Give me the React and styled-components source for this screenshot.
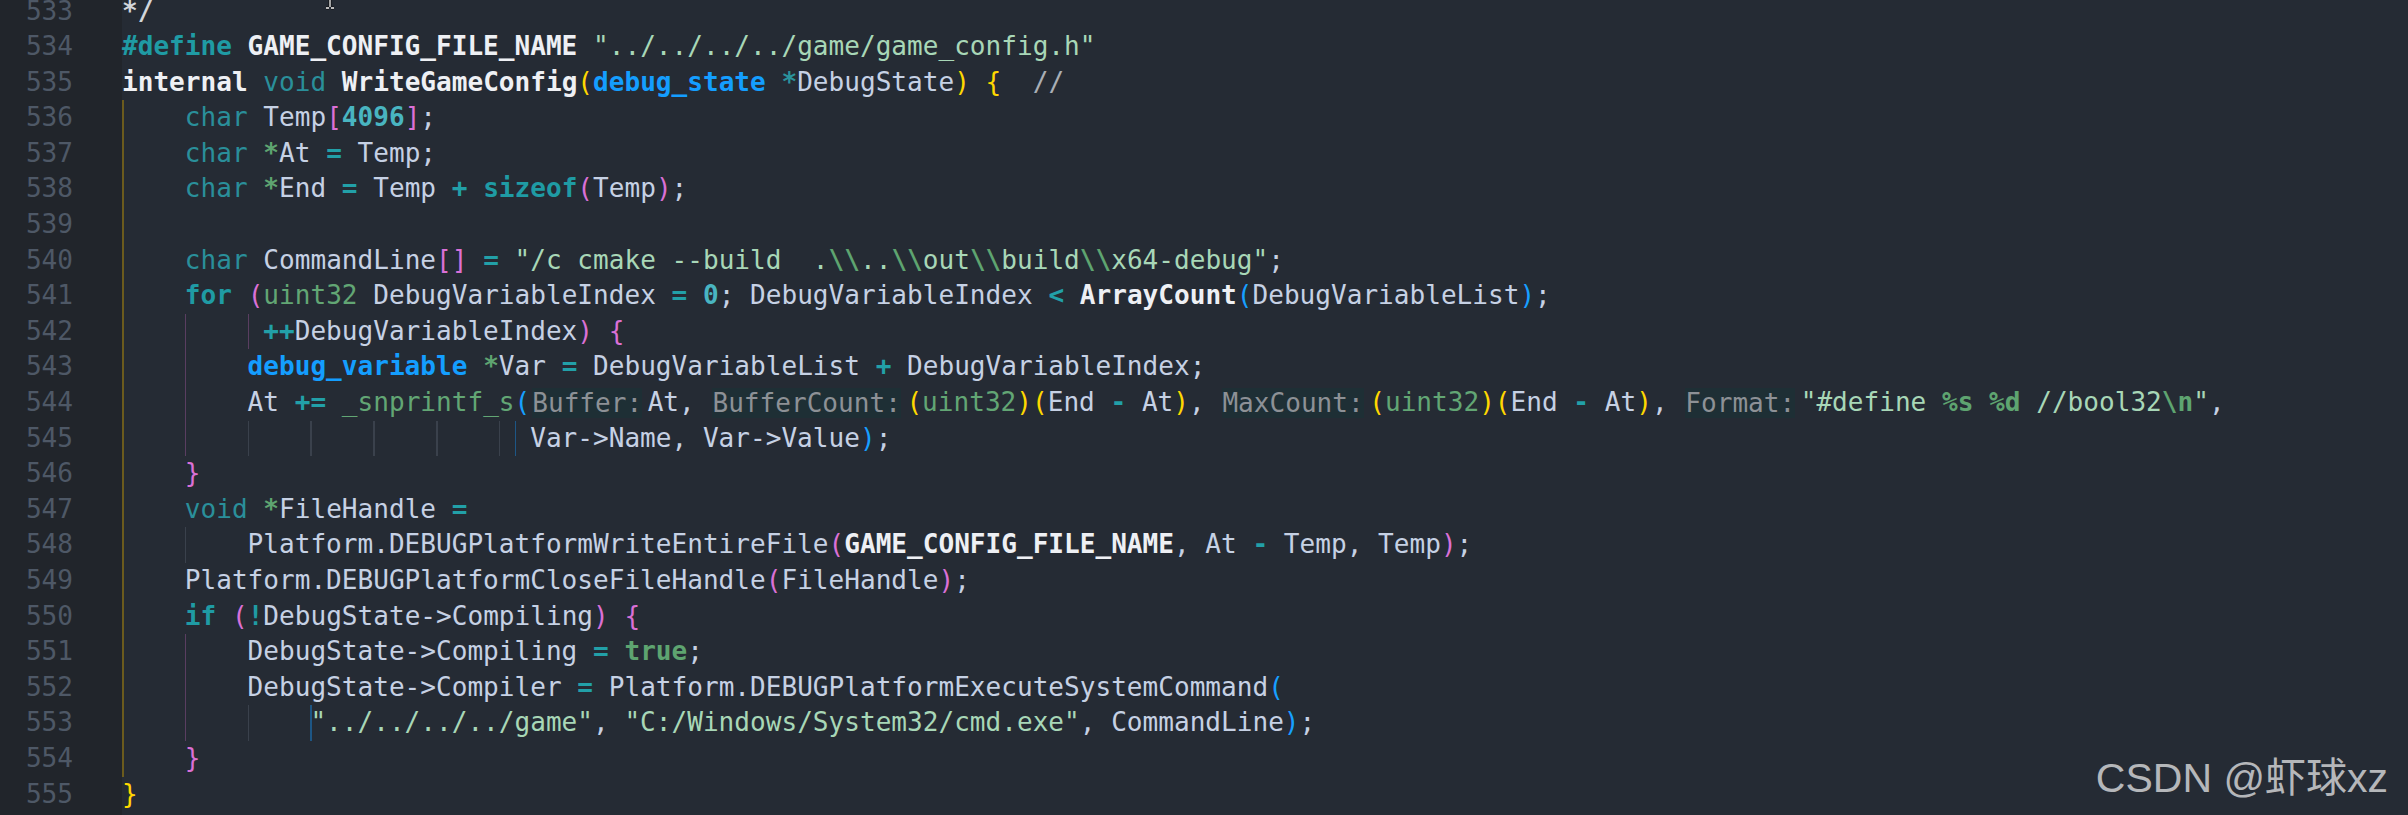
import React from "react";
import styled, { createGlobalStyle } from "styled-components";

const CW = 15.7;
const LH = 35.6;

const Global = createGlobalStyle`
  html, body { margin: 0; padding: 0; background: #252b34; }
  body { width: 2408px; height: 815px; overflow: hidden; }
`;

const Editor = styled.div`
  position: relative;
  display: flex;
  width: 2408px;
  height: 815px;
  overflow: hidden;
  background: #252b34;
  font-family: "DejaVu Sans Mono", "Liberation Mono", monospace;
  font-size: 26.08px;
`;

const Gutter = styled.div`
  flex: 0 0 122px;
  background: #21252b;
  display: flex;
  flex-direction: column;
  margin-top: -6.5px;
`;

const LineNo = styled.div`
  height: ${LH}px;
  line-height: ${LH}px;
  text-align: right;
  padding-right: 49px;
  color: #4e5866;
`;

const Code = styled.div`
  flex: 1;
  display: flex;
  flex-direction: column;
  margin-top: -6.5px;
`;

const Line = styled.div`
  position: relative;
  height: ${LH}px;
  line-height: ${LH}px;
  white-space: pre;
  display: flex;
  align-items: center;
`;

const Guide = styled.span`
  position: absolute;
  top: 0;
  bottom: 0;
  left: ${(p) => p.$col * CW}px;
  width: ${(p) => (p.$kind === "gold" ? 2 : 1.5)}px;
  background: ${(p) =>
    ({ gold: "#6b5b1d", purple: "#5a3e61", gray: "#3a414c", blue: "#1d5685" }[p.$kind])};
`;

const COLORS = {
  d: ["#c6d1e4", 400],
  w: ["#eef0f4", 700],
  kw: ["#1f9ba4", 700],
  ty: ["#2a8f9a", 400],
  op: ["#22a0a8", 700],
  num: ["#49b5c1", 700],
  st: ["#149eff", 700],
  g: ["#62a674", 400],
  gb: ["#5ea470", 700],
  pt: ["#2a939c", 700],
  s: ["#a8d7b7", 400],
  c: ["#a9aeb5", 400],
  cm: ["#d2d5da", 700],
  y: ["#ffd700", 400],
  p: ["#da70d6", 400],
  b: ["#179fff", 400],
};

const Tok = styled.span`
  color: ${(p) => COLORS[p.$k][0]};
  font-weight: ${(p) => COLORS[p.$k][1]};
`;

const Hint = styled.span`
  background: #1e2f35;
  color: #8d9196;
  margin: 0 5.5px 0 2px;
  line-height: 30px;
  height: 30px;
  display: inline-block;
`;

const Watermark = styled.div`
  position: absolute;
  right: 20px;
  top: 758px;
  font-family: "Liberation Sans", Arial, "Noto Sans CJK SC", sans-serif;
  font-size: 41px;
  line-height: 41px;
  color: #b5b7ba;
  white-space: nowrap;
`;

const Cursor = styled.svg`
  position: absolute;
  left: 322px;
  top: 0;
`;

const sp = (n) => ["d", " ".repeat(n)];

const LINES = [
  { n: 533, t: [["cm", "*/"]] },
  {
    n: 534,
    t: [["kw", "#define"], sp(1), ["w", "GAME_CONFIG_FILE_NAME"], sp(1), ["s", '"../../../../game/game_config.h"']],
  },
  {
    n: 535,
    t: [
      ["w", "internal"], sp(1), ["ty", "void"], sp(1), ["w", "WriteGameConfig"], ["y", "("],
      ["st", "debug_state"], sp(1), ["pt", "*"], ["d", "DebugState"], ["y", ")"], sp(1), ["y", "{"], sp(2), ["c", "//"],
    ],
  },
  {
    n: 536, g: [[0, "gold"]],
    t: [sp(4), ["ty", "char"], ["d", " Temp"], ["p", "["], ["num", "4096"], ["p", "]"], ["d", ";"]],
  },
  {
    n: 537, g: [[0, "gold"]],
    t: [sp(4), ["ty", "char"], sp(1), ["gb", "*"], ["d", "At "], ["op", "="], ["d", " Temp;"]],
  },
  {
    n: 538, g: [[0, "gold"]],
    t: [sp(4), ["ty", "char"], sp(1), ["gb", "*"], ["d", "End "], ["op", "="], ["d", " Temp "], ["op", "+"], sp(1),
      ["kw", "sizeof"], ["p", "("], ["d", "Temp"], ["p", ")"], ["d", ";"]],
  },
  { n: 539, g: [[0, "gold"]], t: [] },
  {
    n: 540, g: [[0, "gold"]],
    t: [sp(4), ["ty", "char"], ["d", " CommandLine"], ["p", "[]"], sp(1), ["op", "="], sp(1),
      ["s", '"/c cmake --build  .'], ["gb", "\\\\"], ["s", ".."], ["gb", "\\\\"], ["s", "out"], ["gb", "\\\\"],
      ["s", "build"], ["gb", "\\\\"], ["s", 'x64-debug"'], ["d", ";"]],
  },
  {
    n: 541, g: [[0, "gold"]],
    t: [sp(4), ["kw", "for"], sp(1), ["p", "("], ["g", "uint32"], ["d", " DebugVariableIndex "], ["op", "="], sp(1),
      ["num", "0"], ["d", "; DebugVariableIndex "], ["op", "<"], sp(1), ["w", "ArrayCount"], ["b", "("],
      ["d", "DebugVariableList"], ["b", ")"], ["d", ";"]],
  },
  {
    n: 542, g: [[0, "gold"], [4, "purple"], [8, "purple"]],
    t: [sp(9), ["op", "++"], ["d", "DebugVariableIndex"], ["p", ")"], sp(1), ["p", "{"]],
  },
  {
    n: 543, g: [[0, "gold"], [4, "purple"]],
    t: [sp(8), ["st", "debug_variable"], sp(1), ["gb", "*"], ["d", "Var "], ["op", "="], ["d", " DebugVariableList "],
      ["op", "+"], ["d", " DebugVariableIndex;"]],
  },
  {
    n: 544, g: [[0, "gold"], [4, "purple"]],
    t: [sp(8), ["d", "At "], ["op", "+="], sp(1), ["g", "_snprintf_s"], ["b", "("], ["h", "Buffer:"], ["d", "At, "],
      ["h", "BufferCount:"], ["y", "("], ["g", "uint32"], ["y", ")("], ["d", "End "], ["op", "-"], ["d", " At"], ["y", ")"],
      ["d", ", "], ["h", "MaxCount:"], ["y", "("], ["g", "uint32"], ["y", ")("], ["d", "End "], ["op", "-"], ["d", " At"],
      ["y", ")"], ["d", ", "], ["h", "Format:"], ["s", '"#define '], ["gb", "%s"], ["s", " "], ["gb", "%d"],
      ["s", " //bool32"], ["gb", "\\n"], ["s", '"'], ["d", ","]],
  },
  {
    n: 545, g: [[0, "gold"], [4, "purple"], [8, "gray"], [12, "gray"], [16, "gray"], [20, "gray"], [24, "gray"], [25, "blue"]],
    t: [sp(26), ["d", "Var->Name, Var->Value"], ["b", ")"], ["d", ";"]],
  },
  { n: 546, g: [[0, "gold"]], t: [sp(4), ["p", "}"]] },
  {
    n: 547, g: [[0, "gold"]],
    t: [sp(4), ["ty", "void"], sp(1), ["gb", "*"], ["d", "FileHandle "], ["op", "="]],
  },
  {
    n: 548, g: [[0, "gold"], [4, "gray"]],
    t: [sp(8), ["d", "Platform.DEBUGPlatformWriteEntireFile"], ["p", "("], ["w", "GAME_CONFIG_FILE_NAME"],
      ["d", ", At "], ["op", "-"], ["d", " Temp, Temp"], ["p", ")"], ["d", ";"]],
  },
  {
    n: 549, g: [[0, "gold"]],
    t: [sp(4), ["d", "Platform.DEBUGPlatformCloseFileHandle"], ["p", "("], ["d", "FileHandle"], ["p", ")"], ["d", ";"]],
  },
  {
    n: 550, g: [[0, "gold"]],
    t: [sp(4), ["kw", "if"], sp(1), ["p", "("], ["kw", "!"], ["d", "DebugState->Compiling"], ["p", ")"], sp(1), ["p", "{"]],
  },
  {
    n: 551, g: [[0, "gold"], [4, "purple"]],
    t: [sp(8), ["d", "DebugState->Compiling "], ["op", "="], sp(1), ["gb", "true"], ["d", ";"]],
  },
  {
    n: 552, g: [[0, "gold"], [4, "purple"]],
    t: [sp(8), ["d", "DebugState->Compiler "], ["op", "="], ["d", " Platform.DEBUGPlatformExecuteSystemCommand"], ["b", "("]],
  },
  {
    n: 553, g: [[0, "gold"], [4, "purple"], [8, "gray"], [12, "blue"]],
    t: [sp(12), ["s", '"../../../../game"'], ["d", ", "], ["s", '"C:/Windows/System32/cmd.exe"'], ["d", ", CommandLine"],
      ["b", ")"], ["d", ";"]],
  },
  { n: 554, g: [[0, "gold"]], t: [sp(4), ["p", "}"]] },
  { n: 555, t: [["y", "}"]] },
];

export default function App() {
  return (
    <>
      <Global />
      <Editor>
        <Gutter>
          {LINES.map((l) => (
            <LineNo key={l.n}>{l.n}</LineNo>
          ))}
        </Gutter>
        <Code>
          {LINES.map((l) => (
            <Line key={l.n}>
              {(l.g || []).map(([c, k], i) => (
                <Guide key={i} $col={c} $kind={k} />
              ))}
              {l.t.map(([k, text], i) =>
                k === "h" ? (
                  <Hint key={i}>{text}</Hint>
                ) : (
                  <Tok key={i} $k={k}>
                    {text}
                  </Tok>
                )
              )}
            </Line>
          ))}
        </Code>
        <Cursor width="16" height="14" viewBox="0 0 16 14">
          <path d="M8 0 V7 M4 8 H7 M9 8 H12" stroke="#111" strokeWidth="3" fill="none" />
          <path d="M8 0 V7 M4 8 H7 M9 8 H12" stroke="#f4f4f4" strokeWidth="1.3" fill="none" />
        </Cursor>
        <Watermark>CSDN @虾球xz</Watermark>
      </Editor>
    </>
  );
}
